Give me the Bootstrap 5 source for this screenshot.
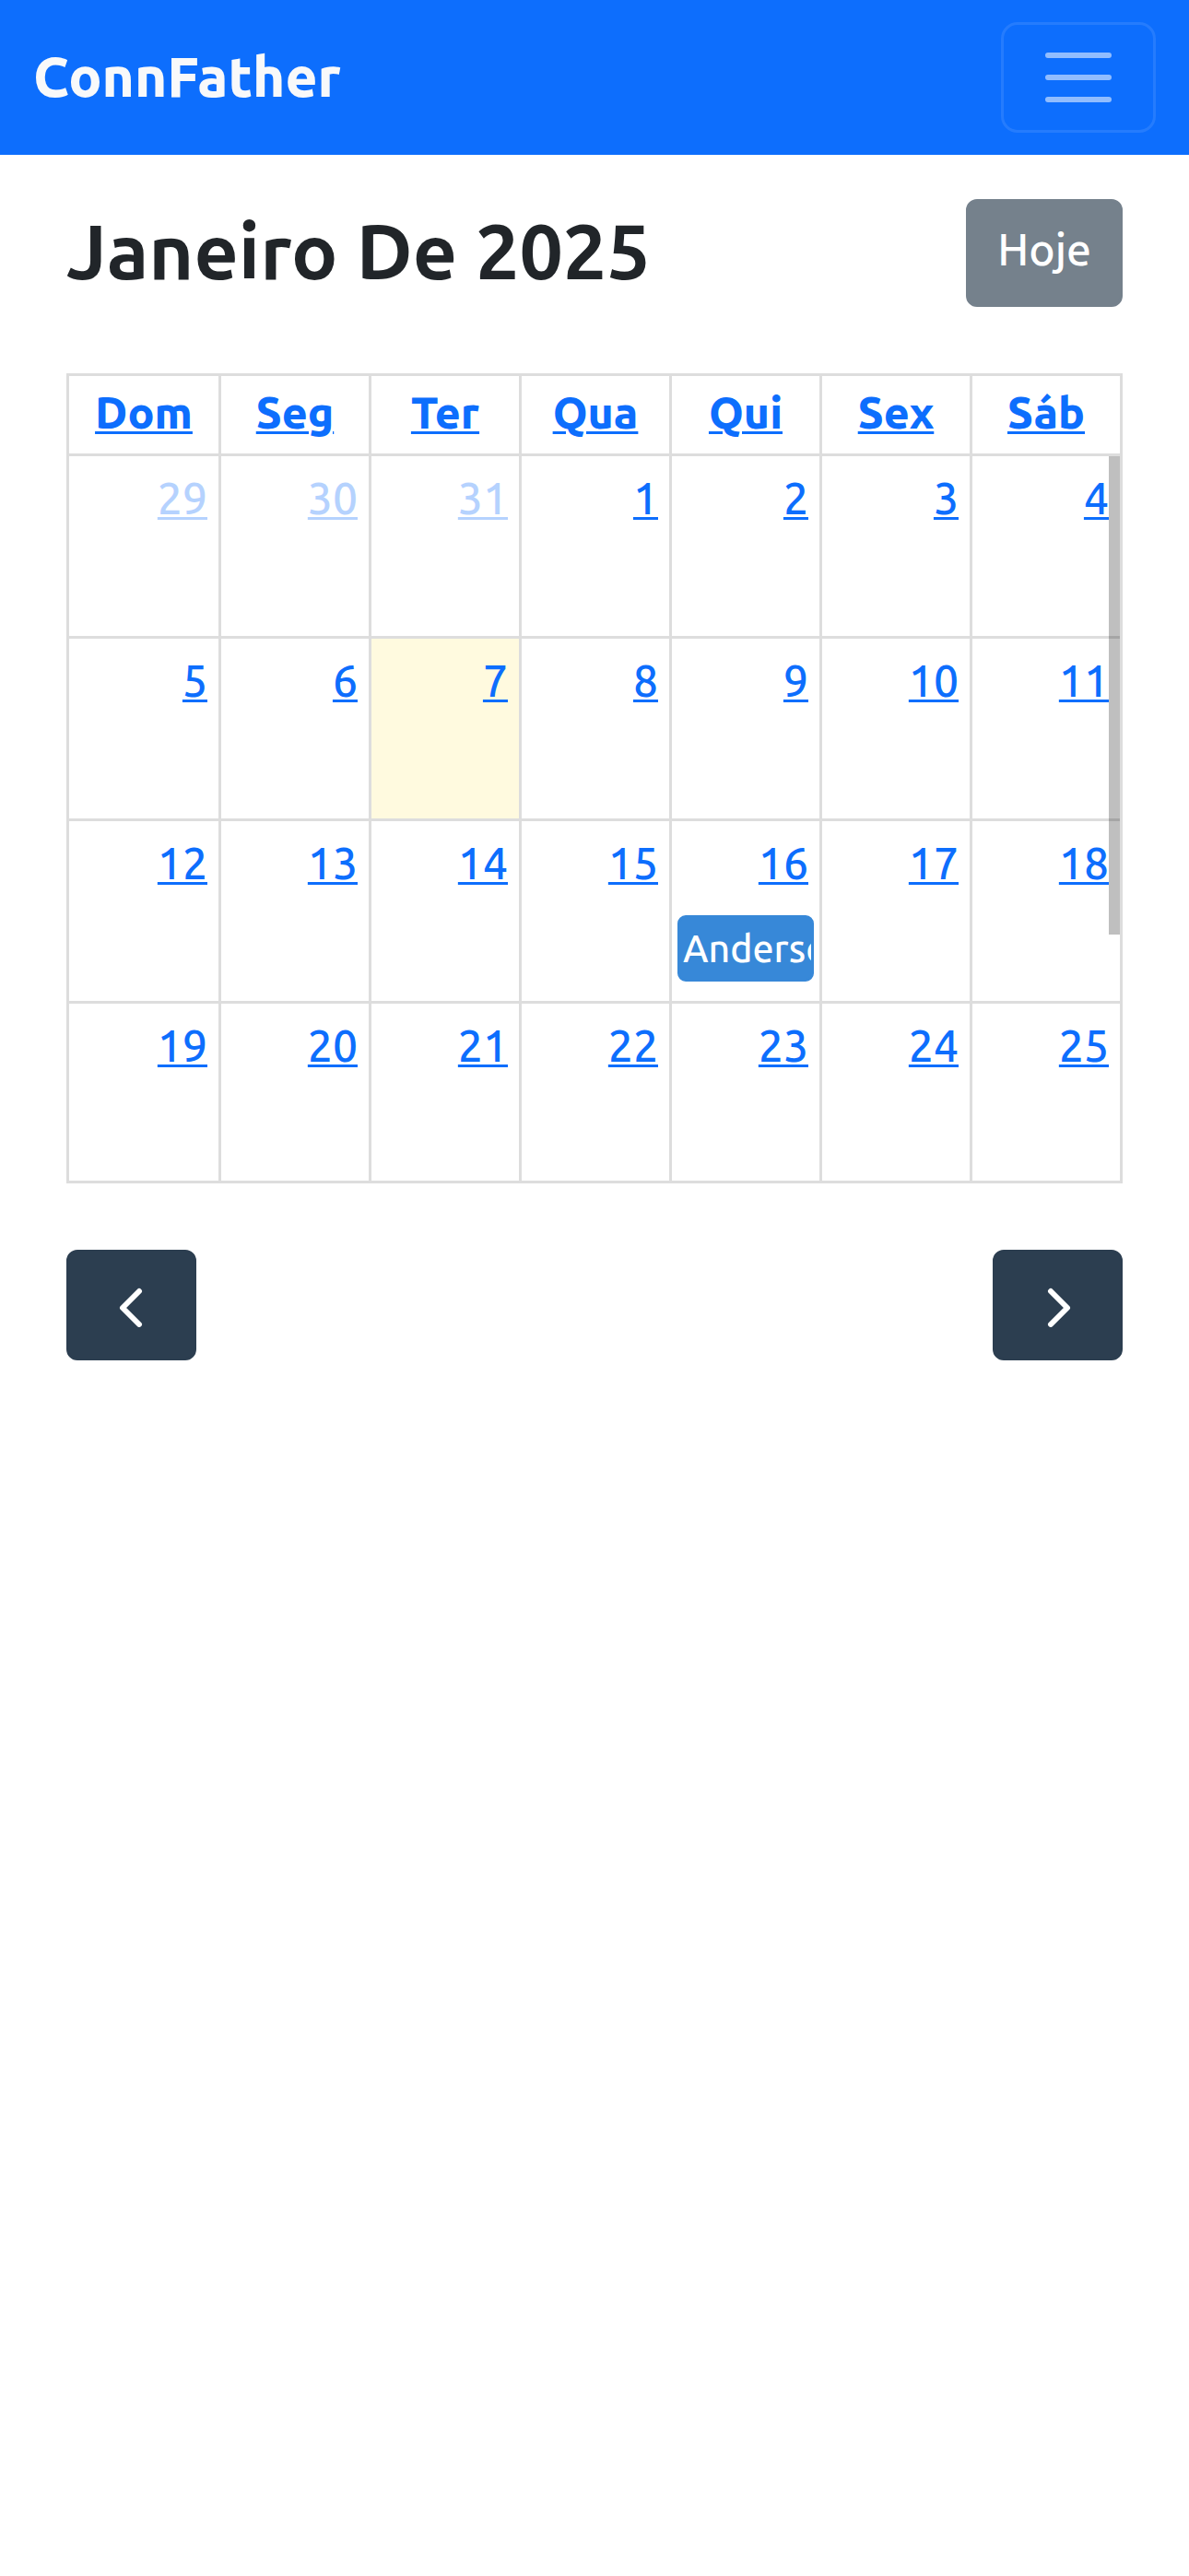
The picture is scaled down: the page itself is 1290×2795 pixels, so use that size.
<!DOCTYPE html>
<html lang="pt-BR">
<head>
<meta charset="utf-8">
<meta name="viewport" content="width=device-width, initial-scale=1">
<title>ConnFather</title>
<link href="https://cdn.jsdelivr.net/npm/bootstrap@5.3.0/dist/css/bootstrap.min.css" rel="stylesheet">
<style>
  html { font-size: 48px; }
  body { font-family: Ubuntu, "Noto Sans", sans-serif; font-weight: 500; background: #fff; }
  .navbar-brand { font-size: 60px; line-height: 90px; font-weight: 800; padding: 0 0 3px; }
  .navbar-toggler { border-width: 3px; }
  .cal-title { font-size: 84px; line-height: 96px; font-weight: 600; padding-bottom: 6px; }
  .cal-btn {
    --bs-btn-border-width: 3px; --bs-btn-border-radius: 12px; --bs-btn-font-weight: 500;
    --bs-btn-color: #fff; --bs-btn-bg: #2c3e50; --bs-btn-border-color: #2c3e50;
    --bs-btn-hover-color: #fff; --bs-btn-hover-bg: #1e2b37; --bs-btn-hover-border-color: #1a252f;
    --bs-btn-disabled-color: #fff; --bs-btn-disabled-bg: #2c3e50; --bs-btn-disabled-border-color: #2c3e50;
    border-width: 3px;
  }
  .cal-today { height: 117px; padding: 15px 31px 24px; font-size: 48px; line-height: 72px; }
  .cal-arrow { width: 141px; height: 120px; padding: 0; }
  .cal-arrow svg { width: 48px; height: 48px; fill: none; stroke: #fff; stroke-width: 6; stroke-linecap: round; stroke-linejoin: round; }
  .cal-grid { width: 100%; table-layout: fixed; border-collapse: separate; border-spacing: 0; border: solid #ddd; border-width: 3px 3px 0 0; }
  .cal-grid th, .cal-grid td { border: solid #ddd; border-width: 0 0 3px 3px; padding: 0; }
  .cal-grid th { height: 87px; padding-bottom: 6px; font-size: 48px; line-height: 72px; font-weight: 800; text-align: center; }
  .cal-grid th:first-child { width: 165px; }
  .cal-grid td { height: 198px; vertical-align: top; }
  .cal-grid tr:last-child td { height: 195px; }
  .cal-grid a { text-decoration-thickness: 3px; text-underline-offset: 3px; }
  .cal-day { padding: 9px 12px 15px 0; font-size: 48px; line-height: 72px; text-align: right; }
  .cal-other { opacity: .3; }
  .cal-now { background: #fffadf; }
  .cal-grid .cal-event { display: block; margin: 6px 6px 0; padding: 0 3px; border: 3px solid #3788d8; border-radius: 9px; background: #3788d8; color: #fff; font-size: 41px; line-height: 66px; text-decoration: none; }
  .cal-event span { display: block; overflow: hidden; white-space: nowrap; margin-right: -3px; }
  .cal-thumb { top: 90px; right: 3px; width: 12px; height: 59%; background: rgba(0,0,0,.25); }
</style>
</head>
<body>
<nav class="navbar navbar-dark bg-primary">
  <div class="container-fluid">
    <a class="navbar-brand text-light" href="#">ConnFather</a>
    <button class="navbar-toggler" type="button" aria-label="Menu"><span class="navbar-toggler-icon"></span></button>
  </div>
</nav>
<main class="px-4 pt-3">
  <header class="d-flex justify-content-between align-items-center mb-4">
    <h2 class="cal-title mb-0">Janeiro De 2025</h2>
    <button class="btn cal-btn cal-today" type="button" disabled>Hoje</button>
  </header>
  <div class="position-relative mb-4">
    <table class="cal-grid">
      <thead>
        <tr><th><a href="#">Dom</a></th><th><a href="#">Seg</a></th><th><a href="#">Ter</a></th><th><a href="#">Qua</a></th><th><a href="#">Qui</a></th><th><a href="#">Sex</a></th><th><a href="#">Sáb</a></th></tr>
      </thead>
      <tbody>
        <tr>
          <td><div class="cal-day cal-other"><a href="#">29</a></div></td>
          <td><div class="cal-day cal-other"><a href="#">30</a></div></td>
          <td><div class="cal-day cal-other"><a href="#">31</a></div></td>
          <td><div class="cal-day"><a href="#">1</a></div></td>
          <td><div class="cal-day"><a href="#">2</a></div></td>
          <td><div class="cal-day"><a href="#">3</a></div></td>
          <td><div class="cal-day"><a href="#">4</a></div></td>
        </tr>
        <tr>
          <td><div class="cal-day"><a href="#">5</a></div></td>
          <td><div class="cal-day"><a href="#">6</a></div></td>
          <td class="cal-now"><div class="cal-day"><a href="#">7</a></div></td>
          <td><div class="cal-day"><a href="#">8</a></div></td>
          <td><div class="cal-day"><a href="#">9</a></div></td>
          <td><div class="cal-day"><a href="#">10</a></div></td>
          <td><div class="cal-day"><a href="#">11</a></div></td>
        </tr>
        <tr>
          <td><div class="cal-day"><a href="#">12</a></div></td>
          <td><div class="cal-day"><a href="#">13</a></div></td>
          <td><div class="cal-day"><a href="#">14</a></div></td>
          <td><div class="cal-day"><a href="#">15</a></div></td>
          <td><div class="cal-day"><a href="#">16</a></div><a class="cal-event" href="#"><span>Anderson</span></a></td>
          <td><div class="cal-day"><a href="#">17</a></div></td>
          <td><div class="cal-day"><a href="#">18</a></div></td>
        </tr>
        <tr>
          <td><div class="cal-day"><a href="#">19</a></div></td>
          <td><div class="cal-day"><a href="#">20</a></div></td>
          <td><div class="cal-day"><a href="#">21</a></div></td>
          <td><div class="cal-day"><a href="#">22</a></div></td>
          <td><div class="cal-day"><a href="#">23</a></div></td>
          <td><div class="cal-day"><a href="#">24</a></div></td>
          <td><div class="cal-day"><a href="#">25</a></div></td>
        </tr>
      </tbody>
    </table>
    <div class="cal-thumb position-absolute"></div>
  </div>
  <footer class="d-flex justify-content-between">
    <button class="btn cal-btn cal-arrow d-flex align-items-center justify-content-center" type="button" aria-label="Mês anterior"><svg viewBox="0 0 48 48"><path d="M32 9 14 27 32 45"/></svg></button>
    <button class="btn cal-btn cal-arrow d-flex align-items-center justify-content-center" type="button" aria-label="Próximo mês"><svg viewBox="0 0 48 48"><path d="M16 9 34 27 16 45"/></svg></button>
  </footer>
</main>
<script src="https://cdn.jsdelivr.net/npm/bootstrap@5.3.0/dist/js/bootstrap.bundle.min.js"></script>
</body>
</html>
